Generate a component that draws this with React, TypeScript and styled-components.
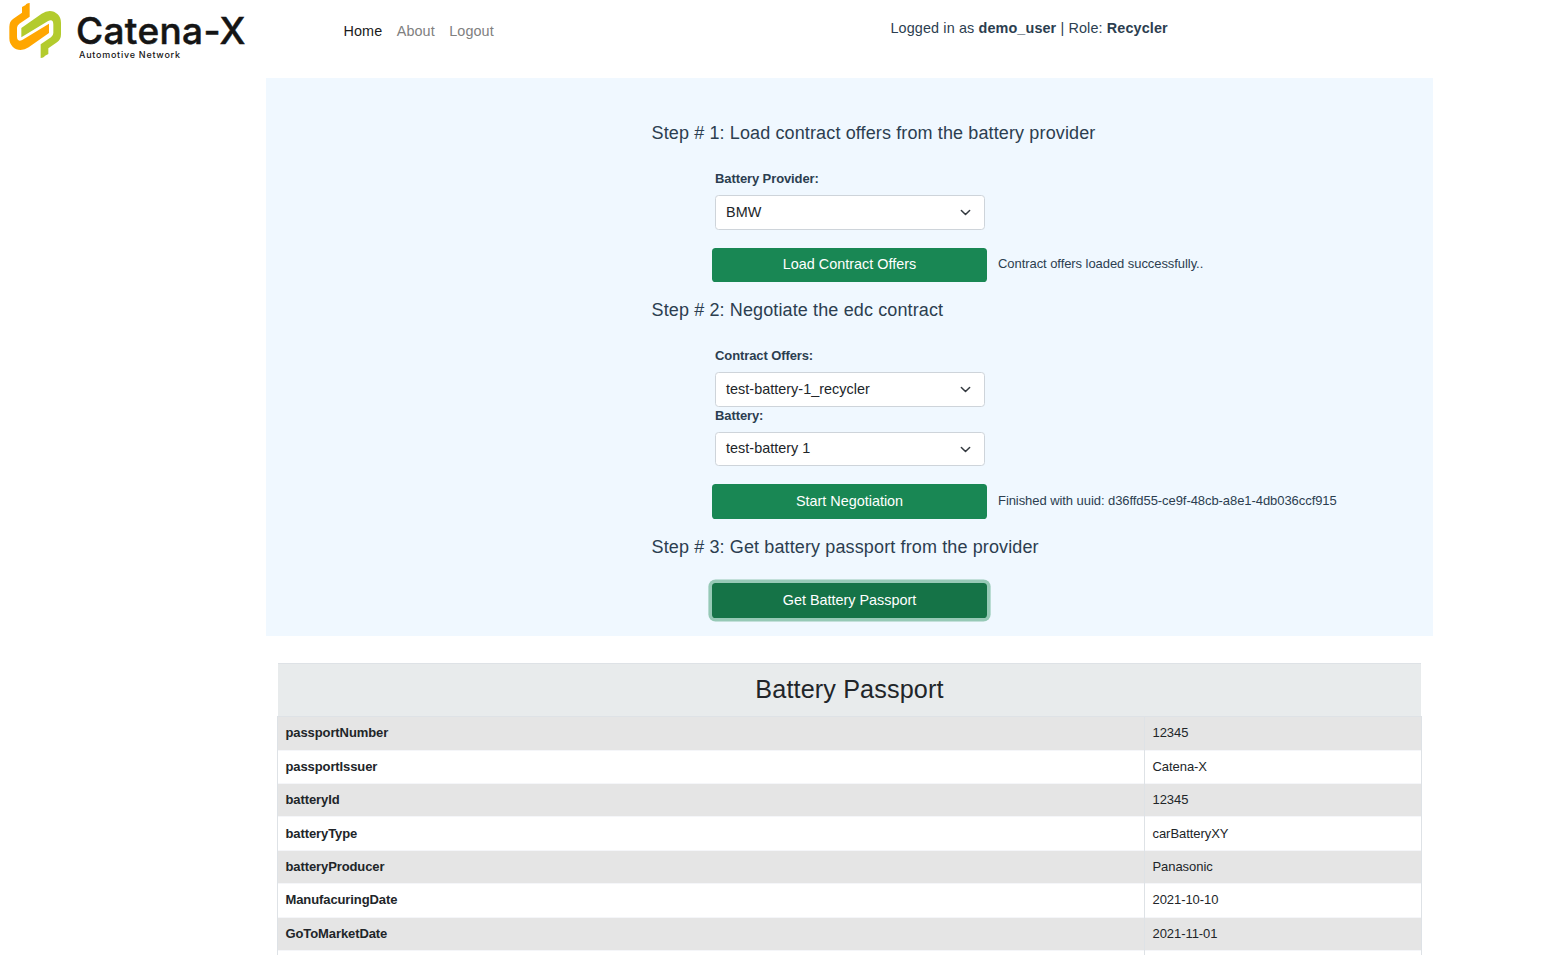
import React from "react";
import styled, { createGlobalStyle } from "styled-components";

const GlobalStyle = createGlobalStyle`
  * { box-sizing: border-box; }
  html, body { margin: 0; background: #fff; overflow: hidden; }
  body { font-family: "Liberation Sans", Arial, sans-serif; color: #2c3e50; }
  h1, h2, p { margin: 0; font-weight: 400; }
`;

const Page = styled.div`
  width: 1546px;
  height: 955px;
  overflow: hidden;
`;

const Header = styled.header`
  display: flex;
  align-items: flex-start;
  height: 78px;
`;

const Logo = styled.svg`
  display: block;
  width: 260px;
  height: 70px;
  flex: none;
`;

const Nav = styled.nav`
  display: flex;
  gap: 14.4px;
  width: 547px;
  margin: 21px 0 0 83.5px;
`;

const NavLink = styled.a<{ $active?: boolean }>`
  font-size: 14.4px;
  line-height: 20px;
  letter-spacing: 0.1px;
  color: ${(p) => (p.$active ? "#1a1a1a" : "#808080")};
`;

const Session = styled.p`
  margin-top: 18px;
  font-size: 14.4px;
  line-height: 20px;
  letter-spacing: 0.12px;
  white-space: nowrap;
`;

const Main = styled.main`
  width: 1167px;
  margin-left: 266px;
`;

const Workflow = styled.section`
  display: flex;
  flex-direction: column;
  gap: 18px;
  padding: 45px 0 18px 385.5px;
  background: aliceblue;
`;

const Step = styled.div`
  display: flex;
  flex-direction: column;
`;

const StepTitle = styled.h2`
  margin-bottom: 26px;
  font-size: 18px;
  line-height: 20px;
  letter-spacing: 0.125px;
  white-space: nowrap;
`;

const Field = styled.label<{ $tight?: boolean }>`
  display: flex;
  flex-direction: column;
  gap: 7px;
  width: 270px;
  margin: ${(p) => (p.$tight ? "-1px" : "0")} 0 0 63.5px;
`;

const FieldLabel = styled.span`
  padding-top: 1px;
  font-size: 13px;
  font-weight: 700;
  line-height: 18px;
  letter-spacing: -0.1px;
`;

const SelectBox = styled.span<{ $height: number }>`
  display: flex;
  align-items: center;
  justify-content: space-between;
  height: ${(p) => p.$height}px;
  padding: 0 13.5px 0 10px;
  border: 1px solid #ced4da;
  border-radius: 3.6px;
  background: #fff;
  color: #212529;
  font-size: 14.4px;
`;

const SelectValue = styled.span`
  padding-bottom: 2px;
  letter-spacing: 0.03px;
`;

const ActionRow = styled.div<{ $gap?: number }>`
  display: flex;
  align-items: center;
  gap: 11px;
  margin: ${(p) => p.$gap ?? 18}px 0 0 60.5px;
`;

const Button = styled.button<{ $height: number; $focused?: boolean }>`
  width: 275px;
  height: ${(p) => p.$height}px;
  padding: 0 0 ${(p) => (p.$height === 34 ? 2 : 1)}px;
  border: 0;
  border-radius: 3.6px;
  background: ${(p) => (p.$focused ? "#157347" : "#198754")};
  box-shadow: ${(p) => (p.$focused ? "0 0 0 3.6px rgba(60, 153, 110, 0.5)" : "none")};
  color: #fff;
  font: 14.4px "Liberation Sans", Arial, sans-serif;
`;

const Status = styled.span`
  padding-bottom: 2px;
  font-size: 13px;
  line-height: 16px;
  letter-spacing: -0.065px;
  white-space: nowrap;
`;

const Passport = styled.section`
  width: 1145px;
  margin: 27px 0 0 11px;
  color: #212529;
`;

const PassportTitle = styled.h1`
  height: 53px;
  margin: 0 1px;
  border-top: 1px solid #dee2e6;
  background: #e8ebec;
  font-size: 25.2px;
  line-height: 50px;
  letter-spacing: 0.13px;
  text-align: center;
`;

const Row = styled.div<{ $height: number; $shaded: boolean; $first: boolean }>`
  display: grid;
  grid-template-columns: 867px 1fr;
  height: ${(p) => p.$height}px;
  border: solid #dee2e6;
  border-width: 0 1px;
  background: ${(p) => (p.$shaded ? "#e5e5e5" : "#fff")};
  box-shadow: inset 0 1px ${(p) => (p.$first ? "#dee2e6" : "#f5f6f9")};
  font-size: 13px;
  line-height: 15px;
`;

const Cell = styled.div<{ $name?: boolean; $top: number }>`
  padding: ${(p) => p.$top}px 0 0 7.5px;
  border-right: ${(p) => (p.$name ? "1px solid #dee2e6" : "0")};
  font-weight: ${(p) => (p.$name ? 700 : 400)};
  letter-spacing: ${(p) => (p.$name ? "-0.1px" : "-0.06px")};
`;

const Chevron = () => (
  <svg width="11" height="11" viewBox="0 0 16 16" fill="none" stroke="#343a40" strokeWidth="2.2" strokeLinecap="round" strokeLinejoin="round">
    <path d="M2 5l6 6 6-6" />
  </svg>
);

const arm =
  "M66 21L77 15Q78 10 89 9V50L58 71Q51 76 51 84V109Q51 128 68 119L147 71V99L86 142Q74 150 62 150Q48 150 38 140Q28 130 28 115V80Q28 64 40 56L66 38Z";

const Brand = () => (
  <Logo viewBox="0 0 260 70">
    <g transform="scale(.33333)">
      <path d={arm} fill="#ffa600" />
      <path d={arm} fill="#b3cb2d" transform="rotate(180 105.5 91.5)" />
    </g>
    <text x="76" y="44.2" fontFamily="Inter" fontSize="37" fontWeight="500" fill="#151515" stroke="#151515" strokeWidth=".5" textLength="169.5">Catena-X</text>
    <text x="79" y="58" fontFamily="Inter" fontSize="9" fontWeight="500" fill="#151515" textLength="101">Automotive Network</text>
  </Logo>
);

const Select = ({ label, value, height = 35, tight }: { label: string; value: string; height?: number; tight?: boolean }) => (
  <Field $tight={tight}>
    <FieldLabel>{label}</FieldLabel>
    <SelectBox $height={height}>
      <SelectValue>{value}</SelectValue>
      <Chevron />
    </SelectBox>
  </Field>
);

const rows: { name: string; value: string; height: number; top: number }[] = [
  { name: "passportNumber", value: "12345", height: 34, top: 9 },
  { name: "passportIssuer", value: "Catena-X", height: 33, top: 9 },
  { name: "batteryId", value: "12345", height: 33, top: 9 },
  { name: "batteryType", value: "carBatteryXY", height: 34, top: 10 },
  { name: "batteryProducer", value: "Panasonic", height: 33, top: 9 },
  { name: "ManufacuringDate", value: "2021-10-10", height: 34, top: 9 },
  { name: "GoToMarketDate", value: "2021-11-01", height: 33, top: 9 },
  { name: "", value: "", height: 33, top: 9 },
];

export default function App() {
  return (
    <Page>
      <GlobalStyle />
      <Header>
        <Brand />
        <Nav>
          <NavLink $active>Home</NavLink>
          <NavLink>About</NavLink>
          <NavLink>Logout</NavLink>
        </Nav>
        <Session>
          Logged in as <b>demo_user</b> | Role: <b>Recycler</b>
        </Session>
      </Header>
      <Main>
        <Workflow>
          <Step>
            <StepTitle>Step # 1: Load contract offers from the battery provider</StepTitle>
            <Select label="Battery Provider:" value="BMW" />
            <ActionRow>
              <Button $height={34}>Load Contract Offers</Button>
              <Status>Contract offers loaded successfully..</Status>
            </ActionRow>
          </Step>
          <Step>
            <StepTitle>Step # 2: Negotiate the edc contract</StepTitle>
            <Select label="Contract Offers:" value="test-battery-1_recycler" />
            <Select label="Battery:" value="test-battery 1" height={34} tight />
            <ActionRow>
              <Button $height={35}>Start Negotiation</Button>
              <Status>Finished with uuid: d36ffd55-ce9f-48cb-a8e1-4db036ccf915</Status>
            </ActionRow>
          </Step>
          <Step>
            <StepTitle>Step # 3: Get battery passport from the provider</StepTitle>
            <ActionRow $gap={0}>
              <Button $height={35} $focused>Get Battery Passport</Button>
            </ActionRow>
          </Step>
        </Workflow>
        <Passport>
          <PassportTitle>Battery Passport</PassportTitle>
          {rows.map((row, i) => (
            <Row key={i} $height={row.height} $shaded={i % 2 === 0} $first={i === 0}>
              <Cell $name $top={row.top}>{row.name}</Cell>
              <Cell $top={row.top}>{row.value}</Cell>
            </Row>
          ))}
        </Passport>
      </Main>
    </Page>
  );
}
